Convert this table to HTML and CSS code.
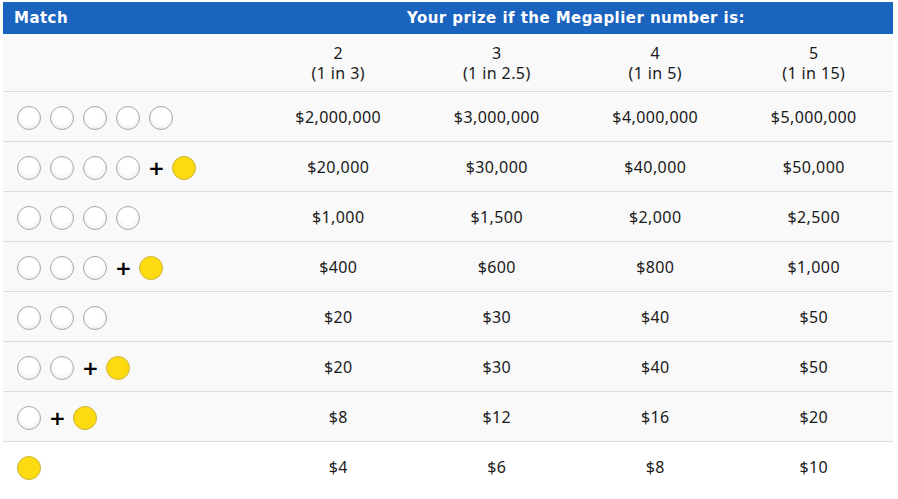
FILE: index.html
```html
<!DOCTYPE html>
<html>
<head>
<meta charset="utf-8">
<link rel="stylesheet" href="styles.css">
</head>
<body>
<div class="table">
  <div class="head">
    <div class="h-match">Match</div>
    <div class="h-prize">Your prize if the Megaplier number is:</div>
  </div>
  <div class="row sub">
    <div class="cell-m"></div>
    <div class="c">2<br>(1 in 3)</div>
    <div class="c">3<br>(1 in 2.5)</div>
    <div class="c">4<br>(1 in 5)</div>
    <div class="c">5<br>(1 in 15)</div>
  </div>
  <div class="row">
    <div class="cell-m"><span class="b"></span><span class="b"></span><span class="b"></span><span class="b"></span><span class="b"></span></div>
    <div class="c">$2,000,000</div><div class="c">$3,000,000</div><div class="c">$4,000,000</div><div class="c">$5,000,000</div>
  </div>
  <div class="row">
    <div class="cell-m"><span class="b"></span><span class="b"></span><span class="b"></span><span class="b"></span><span class="plus">+</span><span class="b y"></span></div>
    <div class="c">$20,000</div><div class="c">$30,000</div><div class="c">$40,000</div><div class="c">$50,000</div>
  </div>
  <div class="row">
    <div class="cell-m"><span class="b"></span><span class="b"></span><span class="b"></span><span class="b"></span></div>
    <div class="c">$1,000</div><div class="c">$1,500</div><div class="c">$2,000</div><div class="c">$2,500</div>
  </div>
  <div class="row">
    <div class="cell-m"><span class="b"></span><span class="b"></span><span class="b"></span><span class="plus">+</span><span class="b y"></span></div>
    <div class="c">$400</div><div class="c">$600</div><div class="c">$800</div><div class="c">$1,000</div>
  </div>
  <div class="row">
    <div class="cell-m"><span class="b"></span><span class="b"></span><span class="b"></span></div>
    <div class="c">$20</div><div class="c">$30</div><div class="c">$40</div><div class="c">$50</div>
  </div>
  <div class="row">
    <div class="cell-m"><span class="b"></span><span class="b"></span><span class="plus">+</span><span class="b y"></span></div>
    <div class="c">$20</div><div class="c">$30</div><div class="c">$40</div><div class="c">$50</div>
  </div>
  <div class="row">
    <div class="cell-m"><span class="b"></span><span class="plus">+</span><span class="b y"></span></div>
    <div class="c">$8</div><div class="c">$12</div><div class="c">$16</div><div class="c">$20</div>
  </div>
  <div class="row last">
    <div class="cell-m"><span class="b y"></span></div>
    <div class="c">$4</div><div class="c">$6</div><div class="c">$8</div><div class="c">$10</div>
  </div>
</div>
</body>
</html>
```
FILE: styles.css
```css
html, body { margin: 0; background: #ffffff; }
body { padding: 2px 5px 0 3px; font-family: "Noto Sans", "Open Sans", sans-serif; color: #1a1a1a; }
.table { width: 890px; }
.head {
  display: grid;
  grid-template-columns: 256px 1fr;
  height: 32px;
  align-items: center;
  background: #1a63bf;
  color: #fff;
  font-family: "DejaVu Sans", sans-serif;
  font-weight: 700;
  font-size: 15px;
  letter-spacing: 0.45px;
}
.h-match { padding-left: 11px; }
.h-prize { text-align: center; }
.row {
  display: grid;
  grid-template-columns: 256px repeat(4, 1fr);
  height: 49px;
  align-items: center;
  background: #f9f9f9;
  border-bottom: 1px solid #dcdcdc;
  font-size: 16px;
  letter-spacing: 0.4px;
}
.row.sub { height: 57px; line-height: 20px; }
.row.last { background: #fff; border-bottom: none; }
.c { text-align: center; }
.cell-m { display: flex; align-items: center; gap: 9px; padding-left: 14px; padding-top: 3px; }
.b {
  width: 22px; height: 22px;
  border-radius: 50%;
  border: 1px solid #a8a8a8;
  background: radial-gradient(circle at 50% 40%, #ffffff 45%, #e6e6e6 100%);
}
.b.y {
  border-color: #c9b43c;
  background: #fedb10;
}
.plus {
  font-family: "DejaVu Sans", sans-serif;
  font-weight: 900;
  font-size: 20px;
  line-height: 20px;
  color: #000;
  margin: 0 -2px 0 -1px;
}
```
